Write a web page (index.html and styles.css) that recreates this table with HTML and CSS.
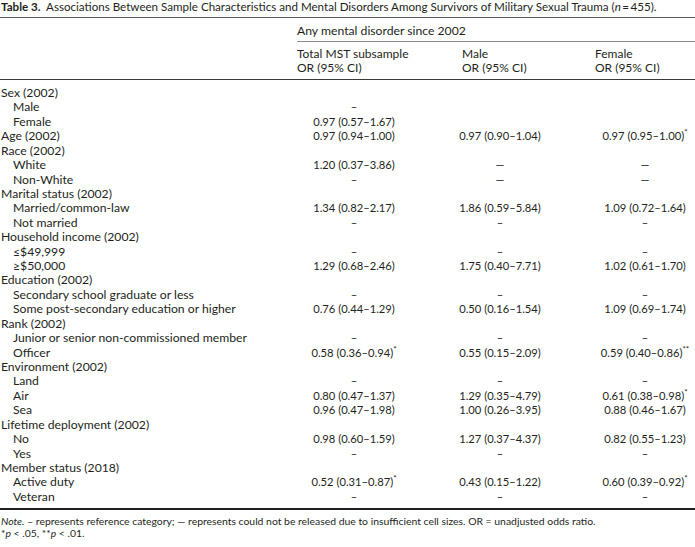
FILE: index.html
```html
<!DOCTYPE html>
<html lang="en">
<head>
<meta charset="utf-8">
<title>Table 3</title>
<link rel="stylesheet" href="styles.css">
</head>
<body>
<div class="page">
  <div class="caption"><b>Table 3.</b>&nbsp; Associations Between Sample Characteristics and Mental Disorders Among Survivors of Military Sexual Trauma (<i>n</i>&#8201;=&#8201;455).</div>
  <div class="thead">
    <div class="hrow1">
      <div class="spacer"></div>
      <div class="span-head">Any mental disorder since 2002</div>
    </div>
    <div class="hrow2">
      <div class="spacer"></div>
      <div class="hcell">Total MST subsample<br>OR (95% CI)</div>
      <div class="hcell">Male<br>OR (95% CI)</div>
      <div class="hcell">Female<br>OR (95% CI)</div>
    </div>
  </div>
  <div class="tbody">
    <div class="row"><div class="lab">Sex (2002)</div><div class="v c1"></div><div class="v c2"></div><div class="v c3"></div></div>
    <div class="row"><div class="lab sub">Male</div><div class="v c1">–</div><div class="v c2"></div><div class="v c3"></div></div>
    <div class="row"><div class="lab sub">Female</div><div class="v c1">0.97 (0.57–1.67)</div><div class="v c2"></div><div class="v c3"></div></div>
    <div class="row"><div class="lab">Age (2002)</div><div class="v c1">0.97 (0.94–1.00)</div><div class="v c2">0.97 (0.90–1.04)</div><div class="v c3">0.97 (0.95–1.00)<sup>*</sup></div></div>
    <div class="row"><div class="lab">Race (2002)</div><div class="v c1"></div><div class="v c2"></div><div class="v c3"></div></div>
    <div class="row"><div class="lab sub">White</div><div class="v c1">1.20 (0.37–3.86)</div><div class="v c2">—</div><div class="v c3">—</div></div>
    <div class="row"><div class="lab sub">Non-White</div><div class="v c1">–</div><div class="v c2">—</div><div class="v c3">—</div></div>
    <div class="row"><div class="lab">Marital status (2002)</div><div class="v c1"></div><div class="v c2"></div><div class="v c3"></div></div>
    <div class="row"><div class="lab sub">Married/common-law</div><div class="v c1">1.34 (0.82–2.17)</div><div class="v c2">1.86 (0.59–5.84)</div><div class="v c3">1.09 (0.72–1.64)</div></div>
    <div class="row"><div class="lab sub">Not married</div><div class="v c1">–</div><div class="v c2">–</div><div class="v c3">–</div></div>
    <div class="row"><div class="lab">Household income (2002)</div><div class="v c1"></div><div class="v c2"></div><div class="v c3"></div></div>
    <div class="row"><div class="lab sub">≤$49,999</div><div class="v c1">–</div><div class="v c2">–</div><div class="v c3">–</div></div>
    <div class="row"><div class="lab sub">≥$50,000</div><div class="v c1">1.29 (0.68–2.46)</div><div class="v c2">1.75 (0.40–7.71)</div><div class="v c3">1.02 (0.61–1.70)</div></div>
    <div class="row"><div class="lab">Education (2002)</div><div class="v c1"></div><div class="v c2"></div><div class="v c3"></div></div>
    <div class="row"><div class="lab sub">Secondary school graduate or less</div><div class="v c1">–</div><div class="v c2">–</div><div class="v c3">–</div></div>
    <div class="row"><div class="lab sub">Some post-secondary education or higher</div><div class="v c1">0.76 (0.44–1.29)</div><div class="v c2">0.50 (0.16–1.54)</div><div class="v c3">1.09 (0.69–1.74)</div></div>
    <div class="row"><div class="lab">Rank (2002)</div><div class="v c1"></div><div class="v c2"></div><div class="v c3"></div></div>
    <div class="row"><div class="lab sub">Junior or senior non-commissioned member</div><div class="v c1">–</div><div class="v c2">–</div><div class="v c3">–</div></div>
    <div class="row"><div class="lab sub">Officer</div><div class="v c1">0.58 (0.36–0.94)<sup>*</sup></div><div class="v c2">0.55 (0.15–2.09)</div><div class="v c3">0.59 (0.40–0.86)<sup>**</sup></div></div>
    <div class="row"><div class="lab">Environment (2002)</div><div class="v c1"></div><div class="v c2"></div><div class="v c3"></div></div>
    <div class="row"><div class="lab sub">Land</div><div class="v c1">–</div><div class="v c2">–</div><div class="v c3">–</div></div>
    <div class="row"><div class="lab sub">Air</div><div class="v c1">0.80 (0.47–1.37)</div><div class="v c2">1.29 (0.35–4.79)</div><div class="v c3">0.61 (0.38–0.98)<sup>*</sup></div></div>
    <div class="row"><div class="lab sub">Sea</div><div class="v c1">0.96 (0.47–1.98)</div><div class="v c2">1.00 (0.26–3.95)</div><div class="v c3">0.88 (0.46–1.67)</div></div>
    <div class="row"><div class="lab">Lifetime deployment (2002)</div><div class="v c1"></div><div class="v c2"></div><div class="v c3"></div></div>
    <div class="row"><div class="lab sub">No</div><div class="v c1">0.98 (0.60–1.59)</div><div class="v c2">1.27 (0.37–4.37)</div><div class="v c3">0.82 (0.55–1.23)</div></div>
    <div class="row"><div class="lab sub">Yes</div><div class="v c1">–</div><div class="v c2">–</div><div class="v c3">–</div></div>
    <div class="row"><div class="lab">Member status (2018)</div><div class="v c1"></div><div class="v c2"></div><div class="v c3"></div></div>
    <div class="row"><div class="lab sub">Active duty</div><div class="v c1">0.52 (0.31–0.87)<sup>*</sup></div><div class="v c2">0.43 (0.15–1.22)</div><div class="v c3">0.60 (0.39–0.92)<sup>*</sup></div></div>
    <div class="row"><div class="lab sub">Veteran</div><div class="v c1">–</div><div class="v c2">–</div><div class="v c3">–</div></div>
  </div>
  <div class="notes">
    <p><i>Note.</i> – represents reference category; — represents could not be released due to insufficient cell sizes. OR = unadjusted odds ratio.</p>
    <p>*<i>p</i> &lt; .05, **<i>p</i> &lt; .01.</p>
  </div>
</div>
</body>
</html>
```

FILE: styles.css
```css
html, body {
  margin: 0;
  padding: 0;
  background: #ffffff;
}

.page {
  width: 695px;
  font-family: "Lato", "Noto Sans", sans-serif;
  font-size: 12.2px;
  color: #231f20;
}

.caption {
  font-size: 11.6px;
  line-height: 13px;
  padding: 0 0 4px 1px;
  white-space: nowrap;
}

.caption b {
  font-weight: 700;
}

.thead {
  border-top: 1.3px solid #5a5a5a;
  border-bottom: 1.3px solid #3a3a3a;
}

.hrow1,
.hrow2 {
  display: grid;
  grid-template-columns: 297px 165px 133px 100px;
}

.hrow1 {
  height: 24px;
  align-items: center;
}

.span-head {
  grid-column: 2 / 5;
  border-bottom: 1px solid #8a8a8a;
  height: 100%;
  display: flex;
  align-items: center;
  padding-top: 2px;
  box-sizing: border-box;
}

.hrow2 {
  padding: 5px 0 5px;
  line-height: 13.5px;
  font-size: 12px;
}

.tbody {
  padding: 6px 0 4px;
  border-bottom: 2px solid #231f20;
}

.row {
  display: grid;
  grid-template-columns: 297px 165px 133px 100px;
  line-height: 14.43px;
  height: 14.43px;
}

.lab {
  padding-left: 1px;
  white-space: nowrap;
}

.lab.sub {
  padding-left: 13px;
}

.v {
  display: flex;
  justify-content: center;
  white-space: nowrap;
  font-size: 11.2px;
}

.c1 {
  padding-right: 51px;
}

.c2 {
  padding-right: 57px;
}

.c3 {
  padding-right: 0;
}

.v sup {
  font-size: 8px;
  line-height: 0;
  position: relative;
  top: 3px;
}

.notes {
  padding-top: 6px;
  font-size: 10.4px;
}

.notes p {
  margin: 0;
  line-height: 11.5px;
  padding-left: 1px;
}
```
